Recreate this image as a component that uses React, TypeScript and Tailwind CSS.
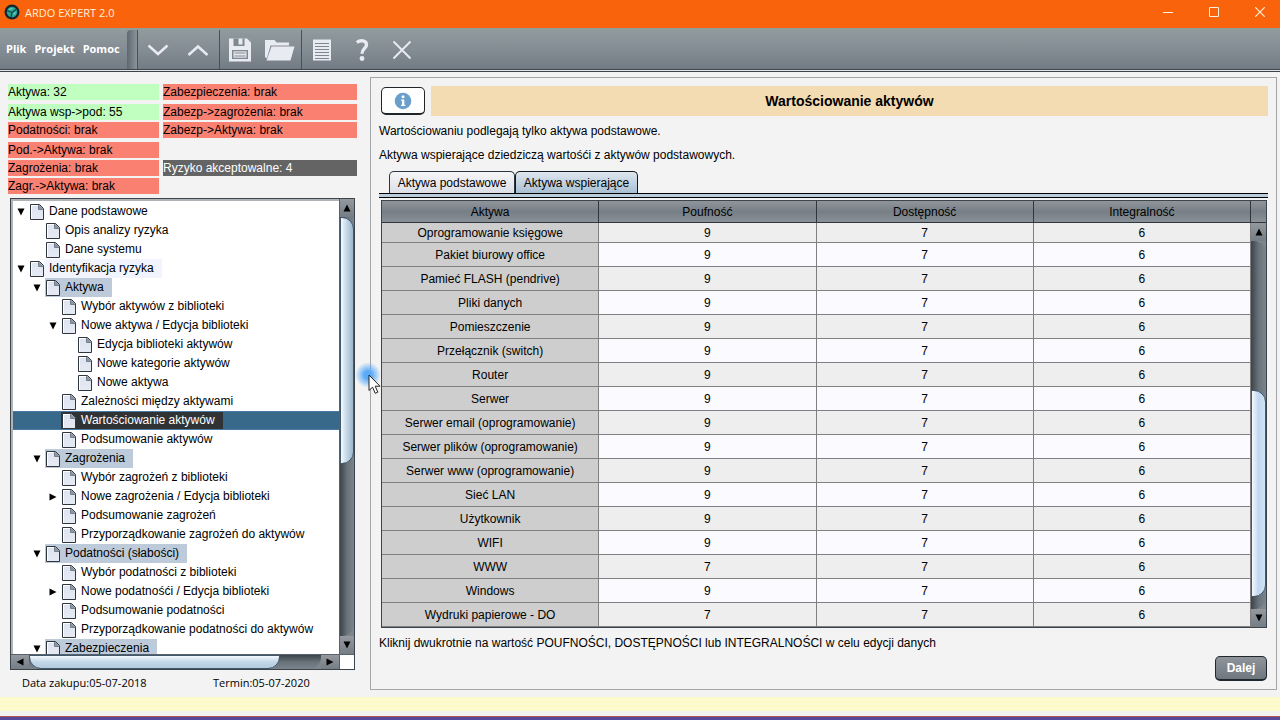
import React from "react";

type Node = { level: number; label: string; arrow?: "down" | "right"; style?: "group" | "pale" | "selected" };

const nodes: Node[] = [
  { level: 0, label: "Dane podstawowe", arrow: "down" },
  { level: 1, label: "Opis analizy ryzyka" },
  { level: 1, label: "Dane systemu" },
  { level: 0, label: "Identyfikacja ryzyka", arrow: "down", style: "pale" },
  { level: 1, label: "Aktywa", arrow: "down", style: "group" },
  { level: 2, label: "Wybór aktywów z biblioteki" },
  { level: 2, label: "Nowe aktywa / Edycja biblioteki", arrow: "down" },
  { level: 3, label: "Edycja biblioteki aktywów" },
  { level: 3, label: "Nowe kategorie aktywów" },
  { level: 3, label: "Nowe aktywa" },
  { level: 2, label: "Zależności między aktywami" },
  { level: 2, label: "Wartościowanie aktywów", style: "selected" },
  { level: 2, label: "Podsumowanie aktywów" },
  { level: 1, label: "Zagrożenia", arrow: "down", style: "group" },
  { level: 2, label: "Wybór zagrożeń z biblioteki" },
  { level: 2, label: "Nowe zagrożenia / Edycja biblioteki", arrow: "right" },
  { level: 2, label: "Podsumowanie zagrożeń" },
  { level: 2, label: "Przyporządkowanie zagrożeń do aktywów" },
  { level: 1, label: "Podatności (słabości)", arrow: "down", style: "group" },
  { level: 2, label: "Wybór podatności z biblioteki" },
  { level: 2, label: "Nowe podatnośći / Edycja biblioteki", arrow: "right" },
  { level: 2, label: "Podsumowanie podatności" },
  { level: 2, label: "Przyporządkowanie podatności do aktywów" },
  { level: 1, label: "Zabezpieczenia", arrow: "down", style: "group" },
];

const assets: [string, number, number, number][] = [
  ["Oprogramowanie księgowe", 9, 7, 6],
  ["Pakiet biurowy office", 9, 7, 6],
  ["Pamieć FLASH (pendrive)", 9, 7, 6],
  ["Pliki danych", 9, 7, 6],
  ["Pomieszczenie", 9, 7, 6],
  ["Przełącznik (switch)", 9, 7, 6],
  ["Router", 9, 7, 6],
  ["Serwer", 9, 7, 6],
  ["Serwer email (oprogramowanie)", 9, 7, 6],
  ["Serwer plików (oprogramowanie)", 9, 7, 6],
  ["Serwer www (oprogramowanie)", 9, 7, 6],
  ["Sieć LAN", 9, 7, 6],
  ["Użytkownik", 9, 7, 6],
  ["WIFI", 9, 7, 6],
  ["WWW", 7, 7, 6],
  ["Windows", 9, 7, 6],
  ["Wydruki papierowe - DO", 7, 7, 6],
];

const indents = ["pl-[3px]", "pl-[19px]", "pl-[35px]", "pl-[51px]"];

function Arrow({ dir }: { dir: "up" | "down" | "left" | "right" }) {
  const d = {
    up: "M5 1.5 8.5 8.5H1.5z",
    down: "M5 8.5 1.5 1.5H8.5z",
    left: "M1.5 5 8.5 1.5V8.5z",
    right: "M8.5 5 1.5 1.5V8.5z",
  }[dir];
  return (
    <svg width="10" height="10" viewBox="0 0 10 10" aria-hidden="true" className="shrink-0">
      <path d={d} fill="#000" />
    </svg>
  );
}

function PageIcon() {
  return (
    <svg width="14" height="16" viewBox="0 0 14 16" aria-hidden="true" className="shrink-0">
      <defs>
        <linearGradient id="page" x1="0" y1="0" x2="0" y2="1">
          <stop offset="0" stopColor="#dde4f0" />
          <stop offset="1" stopColor="#e6eaf3" />
        </linearGradient>
      </defs>
      <path d="M.5.5H9.5L13.500 4.500V15.500H.5z" fill="url(#page)" stroke="#2f363f" />
      <path d="M1.500 15V1.500H8" fill="none" stroke="#fff" />
      <path d="M8.500 1V5.500H13z" fill="#8d97a6" stroke="#767f8c" />
    </svg>
  );
}

const buttonTone = "bg-linear-to-b from-[#95999f] to-[#757d85]";

function StepButton({ dir }: { dir: "up" | "down" | "left" | "right" }) {
  const vertical = dir === "up" || dir === "down";
  return (
    <button
      aria-label={`Przewiń: ${dir}`}
      className={`flex shrink-0 items-center justify-center ${buttonTone} ${vertical ? "h-[18px] w-full" : "h-full w-[18px]"}`}
    >
      <Arrow dir={dir} />
    </button>
  );
}

function TreeRow({ node }: { node: Node }) {
  const selected = node.style === "selected";
  const label = {
    none: "",
    group: "bg-[#bdcada]",
    pale: "",
    selected: "bg-[#303336] text-white",
  }[node.style ?? "none"];
  return (
    <li
      role="treeitem"
      aria-selected={selected}
      className={`flex h-[19px] ${indents[node.level]} ${selected ? "border-y border-[#4b7ba3] bg-[#39698a]" : ""}`}
    >
      <span className="flex w-[13px] shrink-0 items-center">{node.arrow && <Arrow dir={node.arrow} />}</span>
      <span className={`flex items-center whitespace-nowrap ${label}`}>
        <span className="pl-px">
          <PageIcon />
        </span>
        <span className={`pr-2 pl-[5px] leading-[19px] ${node.style === "pale" ? "bg-[#f2f4fd]" : ""}`}>{node.label}</span>
      </span>
    </li>
  );
}

function Badge({ children, tone = "bad" }: { children: React.ReactNode; tone?: "good" | "bad" | "dark" }) {
  const color = { good: "bg-[#c0ffc0]", bad: "bg-[#fa8072]", dark: "bg-[#646464] text-white" }[tone];
  return <div className={`h-4 self-start leading-[17px] whitespace-nowrap ${color}`}>{children}</div>;
}

function ToolButton({ label, children }: { label: string; children: React.ReactNode }) {
  return (
    <button aria-label={label} className="flex h-full w-10 items-center justify-center pt-0.5">
      <svg width="30" height="30" viewBox="0 0 30 30" aria-hidden="true">
        {children}
      </svg>
    </button>
  );
}

function TitleBar() {
  return (
    <header className="flex h-7 shrink-0 items-start bg-[#f8630c] pl-1 font-['Open_Sans','Noto_Sans',sans-serif] text-[11px] text-[#fff0dc]">
      <svg width="16" height="16" viewBox="0 0 16 16" aria-hidden="true" className="mt-1">
        <circle cx="8" cy="8" r="7.500" fill="#14262b" />
        <circle cx="8" cy="8" r="5.200" fill="#2ba598" />
        <path d="M3 6.500 8 8.500 12.500 5M8 8.500 7 13" stroke="#174a4c" strokeWidth="1.300" fill="none" />
        <path d="M5 5.500 8.500 4.500M9.500 10.500 11.500 8.500" stroke="#6cd8c6" strokeWidth="1.200" />
      </svg>
      <h1 className="ml-[5px] flex-1 leading-[26px]">ARDO EXPERT 2.0</h1>
      <div className="flex h-6 gap-1.5">
        <button aria-label="Minimalizuj" className="flex w-10 items-center justify-center">
          <svg width="10" height="10" viewBox="0 0 10 10"><path d="M0 5.500H10" stroke="#fff0dc" /></svg>
        </button>
        <button aria-label="Maksymalizuj" className="flex w-10 items-center justify-center">
          <svg width="10" height="10" viewBox="0 0 10 10"><path d="M.5.5H9.500V9.500H.5z" fill="none" stroke="#fff0dc" /></svg>
        </button>
        <button aria-label="Zamknij okno" className="flex w-10 items-center justify-center">
          <svg width="10" height="10" viewBox="0 0 10 10"><path d="M.3.3 9.700 9.700M9.700.3.3 9.700" stroke="#fff0dc" strokeWidth="1.200" /></svg>
        </button>
      </div>
    </header>
  );
}

function Toolbar() {
  return (
    <div className="shrink-0 border-b border-[#3a424a] bg-[#e4e6e8] pb-px">
      <div className="flex h-[42px] items-stretch border-b border-[#3f464d] bg-linear-to-b from-[#929d9d] via-[#858d95] to-[#737b84]">
        <nav className="flex w-[127px] items-center gap-2 pt-0.5 pl-1.5 font-['Open_Sans','Noto_Sans',sans-serif] text-[11px] font-bold text-white">
          <button>Plik</button>
          <button>Projekt</button>
          <button>Pomoc</button>
        </nav>
        <div className="mt-0.5 w-[11px] rounded-tl-sm border-r border-[#4a5057] bg-linear-to-r from-[#5e666e] to-[#8b939b]" />
        <ToolButton label="Następny"><path d="M5.500 10.500 15 19 24.500 10.500" fill="none" stroke="#e9ebf2" strokeWidth="2.500" /></ToolButton>
        <ToolButton label="Poprzedni"><path d="M5.500 20 15 11.500 24.500 20" fill="none" stroke="#e9ebf2" strokeWidth="2.500" /></ToolButton>
        <div className="mt-0.5 ml-px w-px bg-[#4a5057]" />
        <ToolButton label="Zapisz">
          <path d="M4 3.500H22L26 7.500V26.500H4z" fill="#e9ebf2" />
          <path d="M8.500 3.500V11H19.500V3.500H17.500V9.500H13.500V3.500z" fill="#7f878f" />
          <path d="M7 15H23V24H7z" fill="#7f878f" />
          <path d="M8.500 16.300H21.500V22.700H8.500z" fill="#e9ebf2" />
          <path d="M9.500 18H20.500M9.500 21H20.500" stroke="#7f878f" />
        </ToolButton>
        <ToolButton label="Otwórz">
          <path d="M0 5H9.500L11.500 7.500H24V10.500H5.500L1.800 23.500 0 22z" fill="#e9ebf2" />
          <path d="M6.500 11.500H29.500L25.500 25.500H1.500z" fill="#e9ebf2" />
        </ToolButton>
        <div className="mt-0.5 ml-px w-px bg-[#4a5057]" />
        <ToolButton label="Raport">
          <path d="M6 4.500H24V25.500H6z" fill="#e9ebf2" />
          <path d="M8 8.500H22M8 11.500H22M8 14.500H22M8 17.500H22M8 20.500H22M8 23.500H22" stroke="#7f878f" strokeWidth="1.100" />
        </ToolButton>
        <ToolButton label="Pomoc">
          <path d="M9.800 7.500C13.500 4.700 19.500 5.300 19.500 9.700 19.500 13.500 15 13.500 15 18.800" fill="none" stroke="#e9ebf2" strokeWidth="3.400" />
          <circle cx="15" cy="23.500" r="2.400" fill="#e9ebf2" />
        </ToolButton>
        <ToolButton label="Zamknij"><path d="M6.500 6.500 23.500 23.500M23.500 6.500 6.500 23.500" stroke="#e9ebf2" strokeWidth="1.900" /></ToolButton>
      </div>
    </div>
  );
}

function Sidebar() {
  return (
    <aside className="flex w-[370px] shrink-0 flex-col">
      <section className="grid grid-cols-[151px_194px] grid-rows-[20px_18px_20px_18px_18px_20px] gap-x-1 pt-3 pl-2">
        <Badge tone="good">Aktywa: 32</Badge>
        <Badge>Zabezpieczenia: brak</Badge>
        <Badge tone="good">Aktywa wsp-&gt;pod: 55</Badge>
        <Badge>Zabezp-&gt;zagrożenia: brak</Badge>
        <Badge>Podatności: brak</Badge>
        <Badge>Zabezp-&gt;Aktywa: brak</Badge>
        <Badge>Pod.-&gt;Aktywa: brak</Badge>
        <span />
        <Badge>Zagrożenia: brak</Badge>
        <Badge tone="dark">Ryzyko akceptowalne: 4</Badge>
        <Badge>Zagr.-&gt;Aktywa: brak</Badge>
      </section>
      <div className="mr-[15px] ml-2.5 flex min-h-0 flex-1 flex-col border border-[#3c444c]">
        <div className="flex min-h-0 flex-1">
          <ul role="tree" className="min-h-0 flex-1 overflow-hidden border-t-2 border-l-2 border-[#b0b4b8] bg-white pt-px">
            {nodes.map((n) => (
              <TreeRow key={n.label} node={n} />
            ))}
          </ul>
          <div className="flex w-[15px] flex-col border-l border-[#59616a] bg-[#7d858d]">
            <StepButton dir="up" />
            <div className="flex min-h-0 flex-1 flex-col rounded-br-xl bg-linear-to-r from-[#3b434b] via-[#697179] to-[#7b838c]">
              <div className="h-[59%] rounded-r-xl border border-[#42596c] bg-linear-to-r from-[#f4f9fd] via-[#c3d7e7] to-[#9fb5c8]" />
            </div>
            <StepButton dir="down" />
          </div>
        </div>
        <div className="flex h-[15px] shrink-0 border-t border-[#59616a] bg-[#7d858d]">
          <StepButton dir="left" />
          <div className="flex min-w-0 flex-1 rounded-br-xl bg-linear-to-b from-[#3b434b] via-[#697179] to-[#7b838c]">
            <div className="w-[86%] rounded-b-xl border border-[#42596c] bg-linear-to-b from-[#f4f9fd] via-[#c3d7e7] to-[#b4cbde]" />
          </div>
          <StepButton dir="right" />
          <div className="w-[15px] border-l border-[#59616a] bg-white" />
        </div>
      </div>
      <footer className="flex h-[27px] items-center pl-[22px] font-['Open_Sans','Noto_Sans',sans-serif] text-[11px]">
        <span className="w-[191px]">Data zakupu:05-07-2018</span>
        <span>Termin:05-07-2020</span>
      </footer>
    </aside>
  );
}

function AssetTable() {
  const head = "h-[22px] border-r border-b border-[#2f363d] font-normal";
  const headTone = "bg-linear-to-b from-[#90959b] via-[#767e86] to-[#8b9299]";
  return (
    <div className="mr-[9px] ml-[10px] flex border border-[#3c444c]">
      <div className="min-w-0 flex-1">
        <table className="w-full table-fixed border-separate border-spacing-0 text-center">
          <thead>
            <tr className={headTone}>
              {["Aktywa", "Poufność", "Dostępność", "Integralność"].map((h) => (
                <th key={h} scope="col" className={head}>{h}</th>
              ))}
            </tr>
          </thead>
          <tbody>
            {assets.map(([name, ...values], i) => (
              <tr key={name} className={i % 2 ? "bg-[#fbfafe]" : "bg-[#eeeeee]"}>
                <th scope="row" className={`border-r border-b border-[#808080] bg-[#cecece] font-normal leading-4 ${i ? "h-6" : "h-5"}`}>{name}</th>
                {values.map((v, c) => (
                  <td key={c} className="border-r border-b border-[#808080] leading-4">{v}</td>
                ))}
              </tr>
            ))}
          </tbody>
        </table>
      </div>
      <div className="flex w-[15px] flex-col bg-[#7d858d]">
        <div className={`h-[22px] shrink-0 border-b border-[#2f363d] ${headTone}`} />
        <StepButton dir="up" />
        <div className="flex flex-1 flex-col rounded-r-xl bg-linear-to-r from-[#3b434b] via-[#697179] to-[#7b838c]">
          <div className="flex-[150]" />
          <div className="flex-[206] rounded-r-xl border border-[#42596c] bg-linear-to-r from-[#f4f9fd] via-[#c3d7f0] to-[#d0e5f5]" />
          <div className="flex-[12]" />
        </div>
        <StepButton dir="down" />
      </div>
    </div>
  );
}

function Workspace() {
  return (
    <main className="mt-[5px] mr-[3px] mb-[7px] flex min-w-0 flex-1 flex-col border border-[#a3a6a8]">
      <div className="mt-2 mr-2 ml-2.5 flex items-center gap-1.5">
        <button aria-label="Informacje" className="flex h-7 w-11 items-center justify-center rounded-[5px] border border-b-2 border-[#20252a] bg-white">
          <svg width="18" height="18" viewBox="0 0 18 18" aria-hidden="true">
            <circle cx="9" cy="9" r="8.300" fill="#6b9fcb" />
            <circle cx="9" cy="4.800" r="1.500" fill="#fff" />
            <path d="M7 7.500H10.300V12.700H11.300V14H7V12.700H8V8.700H7z" fill="#fff" />
          </svg>
        </button>
        <h2 className="h-[30px] flex-1 bg-[#f3dcb2] text-center text-sm leading-[30px] font-bold">Wartościowanie aktywów</h2>
      </div>
      <p className="mt-[3px] pl-2 leading-6">Wartościowaniu podlegają tylko aktywa podstawowe.</p>
      <p className="pl-2 leading-6">Aktywa wspierające dziedziczą wartośći z aktywów podstawowych.</p>
      <div role="tablist" className="mt-1 mr-2 ml-2 flex h-[22px] pl-2.5">
        <button role="tab" aria-selected="false" className="w-[126px] rounded-t-[5px] border border-b-0 border-[#2b3640] bg-linear-to-b from-[#f6f6f8] to-[#dcdfe6]">Aktywa podstawowe</button>
        <button role="tab" aria-selected="true" className="w-[123px] rounded-t-[5px] border border-b-0 border-[#101820] bg-linear-to-b from-[#dfe7ee] to-[#a8bfd2]">Aktywa wspierające</button>
      </div>
      <div className="mx-2 mb-0.5 h-[5px] shrink-0 border-y border-black bg-[#b9cddd]" />
      <AssetTable />
      <p className="mt-1.5 pl-2 leading-[18px]">Kliknij dwukrotnie na wartość POUFNOŚCI, DOSTĘPNOŚCI lub INTEGRALNOŚCI w celu edycji danych</p>
      <button className="mt-1 mr-[9px] h-[25px] w-[52px] self-end rounded-[5px] border border-b-2 border-[#20272d] bg-linear-to-b from-[#8e949b] to-[#6f777f] font-bold text-white">Dalej</button>
    </main>
  );
}

export default function App() {
  return (
    <div className="relative flex h-screen flex-col overflow-hidden bg-[#f3f3f3] font-['Liberation_Sans',Arial,sans-serif] text-xs text-black">
      <TitleBar />
      <Toolbar />
      <div className="flex min-h-0 flex-1">
        <Sidebar />
        <Workspace />
      </div>
      <div className="h-3.5 shrink-0 bg-[#fdfbcb]" />
      <div className="mt-[5px] h-1 shrink-0 border-t border-[#b4534f] bg-[#57489c]" />
      <div className="pointer-events-none absolute top-[362px] left-[355px] size-[26px] rounded-full bg-radial from-[#5aaaf8] from-20% to-transparent to-70%" />
      <svg className="pointer-events-none absolute top-[374px] left-[368px]" width="14" height="21" viewBox="0 0 14 21" aria-hidden="true">
        <path d="M1 1V16.500L4.600 13.200 7.200 19.300 9.800 18.200 7.200 12.200H12z" fill="#fff" stroke="#222" />
      </svg>
    </div>
  );
}
